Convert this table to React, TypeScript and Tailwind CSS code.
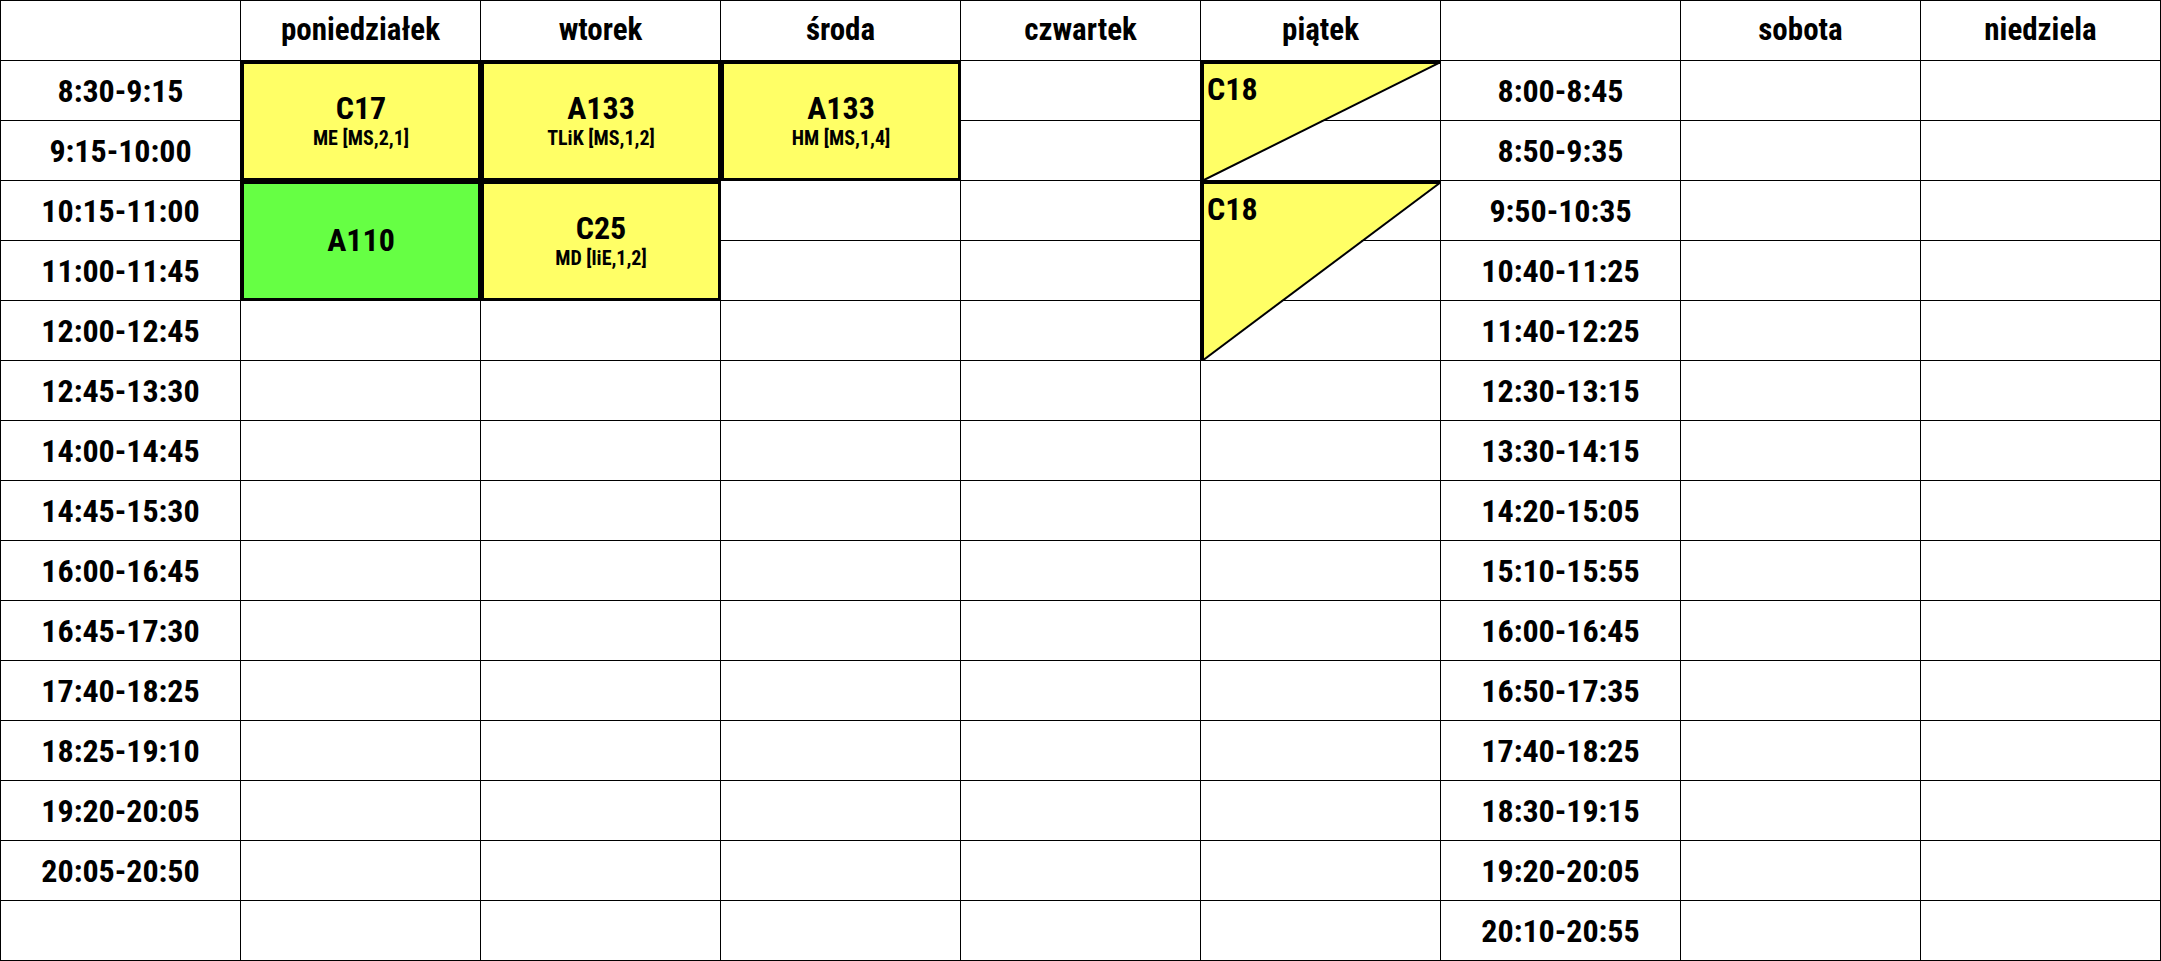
import React from "react"

const header = ["", "poniedziałek", "wtorek", "środa", "czwartek", "piątek", "", "sobota", "niedziela"]

const timesLeft = [
  "8:30-9:15", "9:15-10:00", "10:15-11:00", "11:00-11:45", "12:00-12:45",
  "12:45-13:30", "14:00-14:45", "14:45-15:30", "16:00-16:45", "16:45-17:30",
  "17:40-18:25", "18:25-19:10", "19:20-20:05", "20:05-20:50", "",
]

const timesRight = [
  "8:00-8:45", "8:50-9:35", "9:50-10:35", "10:40-11:25", "11:40-12:25",
  "12:30-13:15", "13:30-14:15", "14:20-15:05", "15:10-15:55", "16:00-16:45",
  "16:50-17:35", "17:40-18:25", "18:30-19:15", "19:20-20:05", "20:10-20:55",
]

type Block = { room: string; info?: string; green?: boolean }

// key: `${row}-${col}`, every block spans two rows
const blocks: Record<string, Block> = {
  "0-1": { room: "C17", info: "ME [MS,2,1]" },
  "2-1": { room: "A110", green: true },
  "0-2": { room: "A133", info: "TLiK [MS,1,2]" },
  "2-2": { room: "C25", info: "MD [liE,1,2]" },
  "0-3": { room: "A133", info: "HM [MS,1,4]" },
}
const covered = ["1-1", "3-1", "1-2", "3-2", "1-3"]

const triangles: Record<number, number> = { 0: 120, 2: 180 }

const Cell = ({ children }: { children?: React.ReactNode }) => (
  <div className="border-r border-b border-black flex items-center justify-center text-[32px]">
    {children}
  </div>
)

const Lesson = ({ block }: { block: Block }) => (
  <div
    className={`row-span-2 border-[3px] border-black flex flex-col items-center justify-center pb-[3px] ${
      block.green ? "bg-[#66ff44]" : "bg-[#ffff66]"
    }`}
  >
    <span className="text-[32px] leading-[36px]">{block.room}</span>
    {block.info && <span className="text-[20px] leading-[24px]">{block.info}</span>}
  </div>
)

const Split = ({ h }: { h: number }) => (
  <div className="relative border-r border-b border-black">
    <div className="absolute left-0 top-0 z-10">
      <svg width={240} height={h} viewBox={`0 0 240 ${h}`} className="block">
        <polygon points={`0,0 240,0 0,${h}`} fill="#ffff66" />
        <line x1={240} y1={1} x2={1} y2={h} stroke="black" strokeWidth={2} />
        <rect x={0} y={0} width={240} height={3} fill="black" />
        <rect x={0} y={0} width={3} height={h} fill="black" />
      </svg>
      <span className="absolute left-[6px] top-[4px] text-[32px]">C18</span>
    </div>
  </div>
)

export default function App() {
  return (
    <div className="bg-white font-['Roboto',sans-serif] font-stretch-condensed font-bold text-black">
      <div className="grid grid-cols-[repeat(9,240px)] auto-rows-[60px] w-fit border-l border-t border-black">
        {header.map((h, i) => (
          <div key={i} className="border-r border-b border-black flex items-center justify-center text-[31px]">
            {h}
          </div>
        ))}
        {timesLeft.map((t, r) => (
          <React.Fragment key={r}>
            <Cell>{t}</Cell>
            {[1, 2, 3].map((c) => {
              const key = `${r}-${c}`
              if (covered.includes(key)) return null
              if (blocks[key]) return <Lesson key={key} block={blocks[key]} />
              return <Cell key={key} />
            })}
            <Cell />
            {triangles[r] ? <Split h={triangles[r]} /> : <Cell />}
            <Cell>{timesRight[r]}</Cell>
            <Cell />
            <Cell />
          </React.Fragment>
        ))}
      </div>
    </div>
  )
}
